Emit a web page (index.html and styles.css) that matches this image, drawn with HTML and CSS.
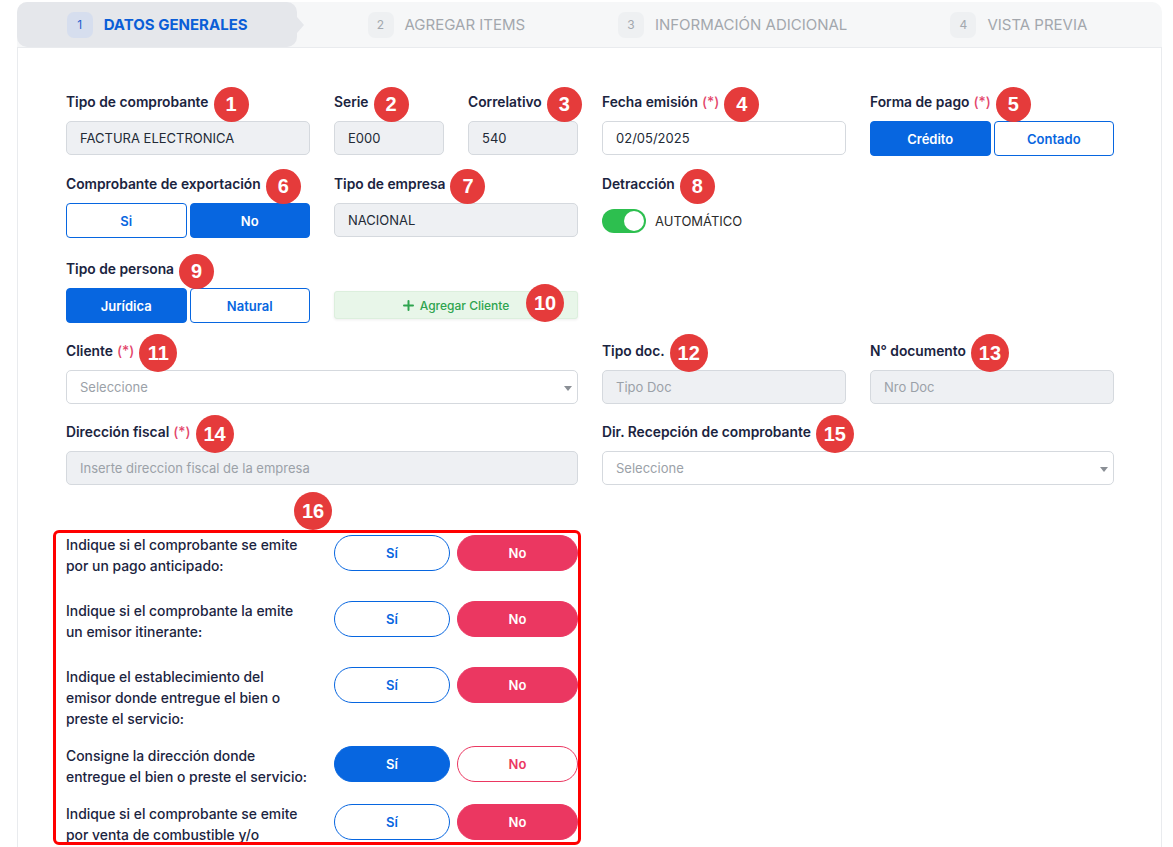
FILE: index.html
```html
<!DOCTYPE html>
<html lang="es">
<head>
<meta charset="utf-8">
<title>Datos generales</title>
<link rel="stylesheet" href="styles.css">
</head>
<body>
<div class="page">
  <div class="stepper">
    <div class="step active"><span class="num">1</span><span class="txt">DATOS GENERALES</span></div>
    <div class="step"><span class="num">2</span><span class="txt">AGREGAR ITEMS</span></div>
    <div class="step"><span class="num">3</span><span class="txt">INFORMACIÓN ADICIONAL</span></div>
    <div class="step"><span class="num">4</span><span class="txt">VISTA PREVIA</span></div>
  </div>
  <div class="card">
    <div class="grid">
      <!-- row 1 -->
      <div class="field">
        <div class="lbl">Tipo de comprobante<span class="badge">1</span></div>
        <div class="input dis">FACTURA ELECTRONICA</div>
      </div>
      <div class="field split">
        <div class="field">
          <div class="lbl">Serie<span class="badge">2</span></div>
          <div class="input dis">E000</div>
        </div>
        <div class="field">
          <div class="lbl">Correlativo<span class="badge">3</span></div>
          <div class="input dis">540</div>
        </div>
      </div>
      <div class="field">
        <div class="lbl">Fecha emisión<span class="req">(*)</span><span class="badge">4</span></div>
        <div class="input">02/05/2025</div>
      </div>
      <div class="field">
        <div class="lbl">Forma de pago<span class="req">(*)</span><span class="badge">5</span></div>
        <div class="seg"><span class="btn on">Crédito</span><span class="btn">Contado</span></div>
      </div>

      <!-- row 2 -->
      <div class="field">
        <div class="lbl">Comprobante de exportación<span class="badge">6</span></div>
        <div class="seg"><span class="btn">Si</span><span class="btn on">No</span></div>
      </div>
      <div class="field">
        <div class="lbl">Tipo de empresa<span class="badge">7</span></div>
        <div class="input dis">NACIONAL</div>
      </div>
      <div class="field">
        <div class="lbl">Detracción<span class="badge">8</span></div>
        <div class="switch-row"><span class="toggle"></span><span class="tg-text">AUTOMÁTICO</span></div>
      </div>
      <div class="field"></div>

      <!-- row 3 -->
      <div class="field r3">
        <div class="lbl">Tipo de persona<span class="badge">9</span></div>
        <div class="seg"><span class="btn on">Jurídica</span><span class="btn">Natural</span></div>
      </div>
      <div class="field r3 end">
        <div class="add">
          <svg width="11" height="11" viewBox="0 0 11 11"><path d="M5.5 1v9M1 5.5h9" stroke="#2ea44f" stroke-width="2" stroke-linecap="round"/></svg>
          <span>Agregar Cliente</span>
          <span class="badge big over">10</span>
        </div>
      </div>
      <div class="field r3 wide"></div>

      <!-- row 4 -->
      <div class="field wide">
        <div class="lbl">Cliente<span class="req">(*)</span><span class="badge big">11</span></div>
        <div class="input select"><span class="ph">Seleccione</span><span class="caret"></span></div>
      </div>
      <div class="field">
        <div class="lbl">Tipo doc.<span class="badge big">12</span></div>
        <div class="input dis"><span class="ph">Tipo Doc</span></div>
      </div>
      <div class="field">
        <div class="lbl">N° documento<span class="badge big">13</span></div>
        <div class="input dis"><span class="ph">Nro Doc</span></div>
      </div>

      <!-- row 5 -->
      <div class="field wide">
        <div class="lbl">Dirección fiscal<span class="req">(*)</span><span class="badge big">14</span></div>
        <div class="input dis"><span class="ph">Inserte direccion fiscal de la empresa</span></div>
      </div>
      <div class="field wide">
        <div class="lbl">Dir. Recepción de comprobante<span class="badge big">15</span></div>
        <div class="input select"><span class="ph">Seleccione</span><span class="caret"></span></div>
      </div>

      <!-- section 16 -->
      <div class="qsec wide">
        <span class="badge big q-badge">16</span>
        <div class="qrow tall">
          <div class="qtext">Indique si el comprobante se emite por un pago anticipado:</div>
          <div class="qbtns"><span class="pill">Sí</span><span class="pill no on">No</span></div>
        </div>
        <div class="qrow tall">
          <div class="qtext">Indique si el comprobante la emite un emisor itinerante:</div>
          <div class="qbtns"><span class="pill">Sí</span><span class="pill no on">No</span></div>
        </div>
        <div class="qrow">
          <div class="qtext">Indique el establecimiento del emisor donde entregue el bien o preste el servicio:</div>
          <div class="qbtns"><span class="pill">Sí</span><span class="pill no on">No</span></div>
        </div>
        <div class="qrow">
          <div class="qtext">Consigne la dirección donde entregue el bien o preste el servicio:</div>
          <div class="qbtns"><span class="pill on">Sí</span><span class="pill no">No</span></div>
        </div>
        <div class="qrow last">
          <div class="qtext">Indique si el comprobante se emite por venta de combustible y/o</div>
          <div class="qbtns"><span class="pill">Sí</span><span class="pill no on">No</span></div>
        </div>
      </div>
    </div>
  </div>
</div>
</body>
</html>
```
FILE: styles.css
```css
html, body {
  margin: 0;
  padding: 0;
  background: #ffffff;
  overflow: hidden;
}
body {
  font-family: Inter, "Open Sans", "Liberation Sans", sans-serif;
  color: #1b2440;
}
.page {
  width: 1145px;
  padding: 2px 0 0 17px;
}

/* stepper */
.stepper {
  display: grid;
  grid-template-columns: repeat(4, minmax(0, 1fr));
  height: 45px;
  background: #f6f7f8;
  border-radius: 10px 10px 0 0;
}
.step {
  display: flex;
  align-items: center;
  justify-content: center;
  gap: 11px;
  position: relative;
}
.step.active {
  background: #e5e7eb;
  border-radius: 10px;
  margin-right: 6px;
}
.step.active::after {
  content: "";
  position: absolute;
  right: -7px;
  top: 50%;
  margin-top: -8px;
  border-left: 7px solid #e5e7eb;
  border-top: 8px solid transparent;
  border-bottom: 8px solid transparent;
}
.num {
  width: 26px;
  height: 26px;
  border-radius: 7px;
  background: #eef0f2;
  color: #a3a8ae;
  font-size: 12px;
  display: flex;
  align-items: center;
  justify-content: center;
}
.active .num {
  background: #d6deee;
  color: #1f5fcf;
}
.txt {
  font-size: 15px;
  color: #a3a7ad;
  font-weight: 400;
}
.active .txt {
  color: #0b5ed7;
  font-weight: 700;
}

/* card */
.card {
  border: 1px solid #e9ebee;
  padding: 44px 47px 0 48px;
  height: 820px;
}
.grid {
  display: grid;
  grid-template-columns: repeat(4, minmax(0, 1fr));
  column-gap: 24px;
  row-gap: 18px;
}
.field {
  display: flex;
  flex-direction: column;
  min-width: 0;
}
.field.split {
  display: grid;
  grid-template-columns: repeat(2, minmax(0, 1fr));
  column-gap: 24px;
}
.wide {
  grid-column: span 2;
}
.field.r3 {
  margin-top: 3px;
}
.field.end {
  justify-content: flex-end;
  padding-bottom: 4px;
}
.lbl {
  display: flex;
  align-items: center;
  height: 20px;
  margin-bottom: 9px;
  font-size: 13.8px;
  font-weight: 600;
  color: #1b2440;
  white-space: nowrap;
}
.req {
  color: #e3456b;
  margin-left: 4px;
  font-weight: 500;
}
.badge {
  width: 35px;
  height: 35px;
  border-radius: 50%;
  background: #e53b3b;
  color: #fff;
  font-family: "Liberation Sans", Arial, sans-serif;
  font-size: 20px;
  font-weight: 700;
  display: inline-flex;
  align-items: center;
  justify-content: center;
  margin: -8px 0 -8px 5px;
  flex: none;
  transform: translateY(2px);
}
.badge.big {
  width: 38px;
  height: 38px;
  margin-top: -9px;
  margin-bottom: -9px;
}
.input {
  height: 34px;
  box-sizing: border-box;
  border: 1px solid #d5d9de;
  border-radius: 5px;
  padding: 0 13px;
  display: flex;
  align-items: center;
  font-size: 13px;
  color: #222a36;
  background: #fff;
}
.input.dis {
  background: #eef0f3;
}
.ph {
  color: #9ba1a8;
}
.select {
  justify-content: space-between;
  padding-right: 5px;
}
.caret {
  width: 0;
  height: 0;
  border-top: 5px solid #8a8f95;
  border-left: 4px solid transparent;
  border-right: 4px solid transparent;
  margin-top: 3px;
}
.seg {
  display: flex;
  gap: 3px;
  height: 35px;
}
.btn {
  flex: 1;
  box-sizing: border-box;
  border: 1px solid #0766e0;
  border-radius: 4px;
  display: flex;
  align-items: center;
  justify-content: center;
  font-size: 13px;
  font-weight: 600;
  color: #0766e0;
  background: #fff;
}
.btn.on {
  background: #0766e0;
  color: #fff;
}
.switch-row {
  display: flex;
  align-items: center;
  height: 35px;
}
.toggle {
  width: 44px;
  height: 24px;
  border-radius: 12px;
  background: #2dbf4f;
  position: relative;
}
.toggle::after {
  content: "";
  position: absolute;
  right: 2px;
  top: 2px;
  width: 20px;
  height: 20px;
  border-radius: 50%;
  background: #fff;
}
.tg-text {
  font-size: 13px;
  color: #2b2b2b;
  margin-left: 9px;
}
.add {
  position: relative;
  height: 28px;
  box-sizing: border-box;
  background: #e8f6e9;
  border: 1px solid #dcefdd;
  border-radius: 3px;
  box-shadow: 0 1px 3px rgba(0, 0, 0, 0.07);
  color: #2ea44f;
  font-size: 12px;
  font-weight: 500;
  display: flex;
  align-items: center;
  justify-content: center;
  gap: 6px;
}
.badge.over {
  position: absolute;
  right: 13px;
  top: 50%;
  margin: -21px 0 0 0;
  transform: none;
}

/* section 16 */
.qsec {
  position: relative;
  margin-top: 32px;
}
.qsec::before {
  content: "";
  position: absolute;
  left: -13px;
  right: -3px;
  top: -5px;
  height: 315px;
  box-sizing: border-box;
  border: 3px solid #ff0000;
  border-radius: 6px;
  pointer-events: none;
}
.q-badge {
  position: absolute;
  left: 228px;
  top: -34px;
  margin: 0;
  transform: none;
  z-index: 2;
}
.qrow {
  display: grid;
  grid-template-columns: repeat(2, minmax(0, 1fr));
  column-gap: 24px;
  margin-bottom: 16px;
}
.qrow.tall {
  margin-bottom: 24px;
}
.qrow.last {
  margin-bottom: 0;
}
.qtext {
  font-size: 13.9px;
  font-weight: 500;
  line-height: 21px;
  color: #1b2440;
}
.qbtns {
  display: grid;
  grid-template-columns: 116px 121px;
  column-gap: 7px;
  height: 36px;
}
.pill {
  box-sizing: border-box;
  border: 1px solid #0766e0;
  border-radius: 18px;
  color: #0766e0;
  background: #fff;
  font-size: 13px;
  font-weight: 600;
  display: flex;
  align-items: center;
  justify-content: center;
}
.pill.on {
  background: #0766e0;
  color: #fff;
}
.pill.no {
  border-color: #eb3761;
  color: #eb3761;
  background: #fff;
}
.pill.no.on {
  background: #eb3761;
  color: #fff;
}
```
